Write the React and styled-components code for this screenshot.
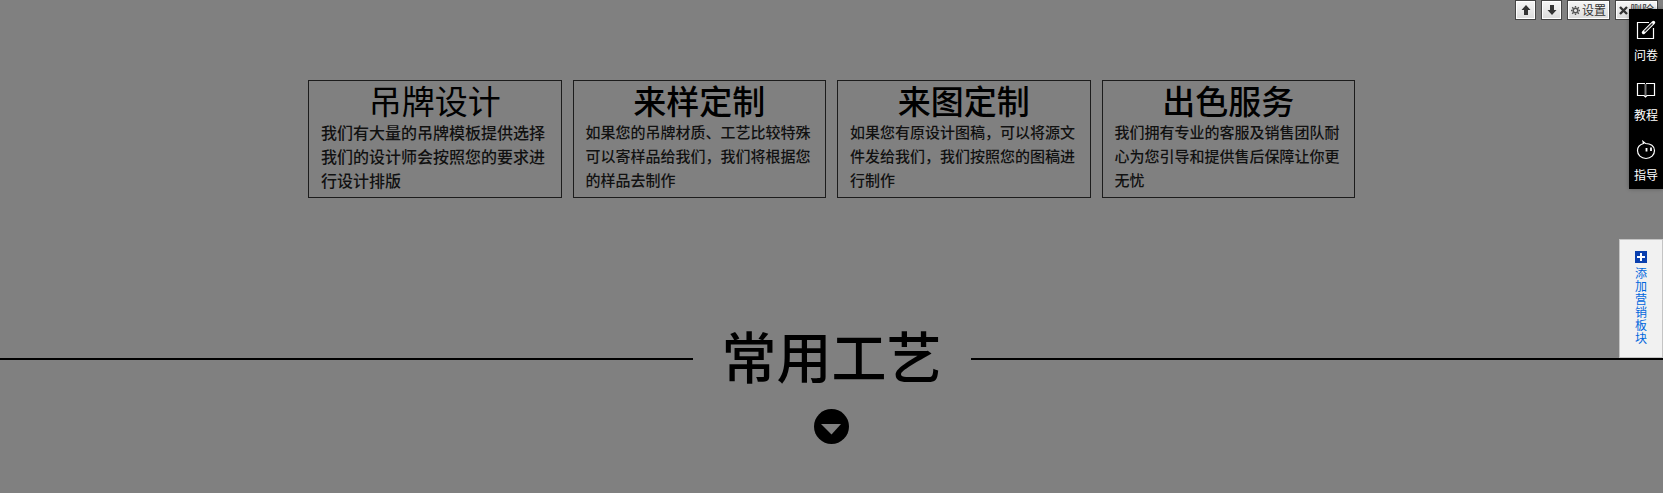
import React from "react";
import styled, { createGlobalStyle } from "styled-components";

const GlobalStyle = createGlobalStyle`
  * {
    box-sizing: border-box;
  }
  body {
    margin: 0;
    background: #808080;
    color: black;
    font-family: "Noto Sans CJK SC", "Noto Sans", sans-serif;
  }
`;

const services = [
  {
    title: "吊牌设计",
    text: "我们有大量的吊牌模板提供选择我们的设计师会按照您的要求进行设计排版",
    light: true,
  },
  {
    title: "来样定制",
    text: "如果您的吊牌材质、工艺比较特殊可以寄样品给我们，我们将根据您的样品去制作",
  },
  {
    title: "来图定制",
    text: "如果您有原设计图稿，可以将源文件发给我们，我们按照您的图稿进行制作",
  },
  {
    title: "出色服务",
    text: "我们拥有专业的客服及销售团队耐心为您引导和提供售后保障让你更无忧",
  },
];

function ArrowIcon({ down }) {
  return (
    <svg width="10" height="10" viewBox="0 0 10 10" fill="#333">
      {down ? (
        <path d="M3 0h4v5h2.5L5 10 .5 5H3z" />
      ) : (
        <path d="M3 10h4V5h2.5L5 0 .5 5H3z" />
      )}
    </svg>
  );
}

function GearIcon() {
  return (
    <svg width="9" height="9" viewBox="0 0 9 9" fill="none" stroke="#555">
      <circle cx="4.5" cy="4.5" r="2.3" strokeWidth="1.5" />
      <path
        d="M4.5 0v1.5M4.5 7.5V9M0 4.5h1.5M7.5 4.5H9M1.2 1.2l1.2 1.2M6.6 6.6l1.2 1.2M7.8 1.2L6.6 2.4M2.4 6.6L1.2 7.8"
        strokeWidth="1.4"
      />
    </svg>
  );
}

function CrossIcon() {
  return (
    <svg width="9" height="9" viewBox="0 0 9 9" stroke="#333" strokeWidth="2.4">
      <path d="M1 1l7 7M8 1L1 8" />
    </svg>
  );
}

function EditIcon() {
  return (
    <svg width="20" height="20" viewBox="0 0 20 20" fill="none" stroke="white">
      <path d="M13 2.5H1.5v16h16V8" strokeWidth="1.2" />
      <path d="M7.5 12.5L17.5 2.5" strokeWidth="3.4" strokeLinecap="round" />
      <path d="M8.5 11.5l8-8" stroke="#222" strokeWidth="1.4" />
    </svg>
  );
}

function BookIcon() {
  return (
    <svg width="20" height="20" viewBox="0 0 20 20" fill="none" stroke="white">
      <path d="M9.5 4v12" stroke="#777" strokeWidth="2" />
      <path d="M9 3.5H1.5v12H8l1.5 1.5 1.5-1.5h7.5v-12H10" strokeWidth="1.2" />
    </svg>
  );
}

function FaceIcon() {
  return (
    <svg width="20" height="20" viewBox="0 0 20 20" fill="none" stroke="white">
      <path
        d="M7 1.5l2.5 2c5 0 9 2.5 9 7s-3.5 8-8.5 8-8.5-3.5-8.5-8c0-3.5 2.5-6 6-7z"
        strokeWidth="1.2"
      />
      <path d="M10.5 8v3.5M15 7.5v3.5" strokeWidth="1.8" />
    </svg>
  );
}

function App() {
  return (
    <Page>
      <GlobalStyle />
      <ServiceList>
        {services.map((service) => (
          <ServiceCard key={service.title}>
            <ServiceTitle $light={service.light}>{service.title}</ServiceTitle>
            <ServiceText $large={service.light}>{service.text}</ServiceText>
          </ServiceCard>
        ))}
      </ServiceList>

      <SectionHeader>
        <h2>常用工艺</h2>
      </SectionHeader>
      <Marker>
        <svg width="35" height="35" viewBox="0 0 35 35">
          <circle cx="17.5" cy="17.5" r="17.5" fill="black" />
          <path d="M7 15h20L17.5 25.5z" fill="#808080" />
        </svg>
      </Marker>

      <Toolbar>
        <ToolButton aria-label="上移">
          <ArrowIcon />
        </ToolButton>
        <ToolButton aria-label="下移">
          <ArrowIcon down />
        </ToolButton>
        <ToolButton $wide>
          <GearIcon />
          设置
        </ToolButton>
        <ToolButton $wide>
          <CrossIcon />
          删除
        </ToolButton>
      </Toolbar>

      <HelpBar>
        <HelpLink href="#survey">
          <EditIcon />
          问卷
        </HelpLink>
        <HelpLink href="#tutorial">
          <BookIcon />
          教程
        </HelpLink>
        <HelpLink href="#guide">
          <FaceIcon />
          指导
        </HelpLink>
      </HelpBar>

      <AddPanel>
        <svg width="12" height="12" viewBox="0 0 12 12">
          <rect width="12" height="12" fill="#0a3fae" />
          <path d="M6 2v8M2 6h8" stroke="white" strokeWidth="2" />
        </svg>
        <span>添加营销板块</span>
      </AddPanel>
    </Page>
  );
}

export default App;

const Page = styled.div`
  position: relative;
  min-height: 100vh;
  padding-top: 80px;
  overflow: hidden;
`;

const ServiceList = styled.div`
  display: flex;
  gap: 11px;
  max-width: 1047px;
  margin: 0 auto;
`;

const ServiceCard = styled.div`
  flex: 1;
  min-height: 118px;
  border: 1px solid #1c1c1c;
`;

const ServiceTitle = styled.h3`
  margin: 0;
  font-size: 33px;
  line-height: 39px;
  font-weight: ${(props) => (props.$light ? 400 : 500)};
  text-align: center;
`;

const ServiceText = styled.p`
  margin: 0;
  padding: 0 12px;
  font-size: ${(props) => (props.$large ? 16 : 15)}px;
  line-height: 24px;
  font-weight: 500;
  color: #111;
`;

const SectionHeader = styled.div`
  display: flex;
  align-items: center;
  margin-top: 116px;
  &::before,
  &::after {
    content: "";
    flex: 1;
    height: 2px;
    background: black;
  }
  > h2 {
    width: 278px;
    margin: 0;
    padding-bottom: 10px;
    font-size: 55px;
    line-height: 80px;
    font-weight: 500;
    text-align: center;
  }
`;

const Marker = styled.div`
  display: flex;
  justify-content: center;
  margin-top: 5px;
`;

const Toolbar = styled.div`
  position: absolute;
  top: 0;
  right: 5px;
  display: flex;
  gap: 5px;
`;

const ToolButton = styled.button`
  display: flex;
  align-items: center;
  justify-content: center;
  gap: 2px;
  width: ${(props) => (props.$wide ? 43 : 21)}px;
  height: 20px;
  padding: 0;
  border: 1px solid #444;
  background: linear-gradient(#f6f6f6, #dcdcdc);
  box-shadow: inset 0 0 0 1px white;
  color: #333;
  font-family: inherit;
  font-size: 12px;
  line-height: 18px;
  white-space: nowrap;
`;

const HelpBar = styled.nav`
  position: absolute;
  top: 9px;
  right: 0;
  width: 34px;
  padding: 11px 0 5px;
  display: flex;
  flex-direction: column;
  gap: 16px;
  background: black;
  box-shadow: 0 0 4px rgba(0, 0, 0, 0.3);
`;

const HelpLink = styled.a`
  display: flex;
  flex-direction: column;
  align-items: center;
  gap: 6px;
  color: white;
  font-size: 12px;
  line-height: 18px;
  text-decoration: none;
`;

const AddPanel = styled.button`
  position: absolute;
  top: 239px;
  right: 0;
  width: 44px;
  height: 119px;
  padding: 0 0 2px;
  display: flex;
  flex-direction: column;
  align-items: center;
  justify-content: center;
  gap: 3px;
  border: 1px solid #c4c4c4;
  background: #f1f1f1;
  color: #0066dd;
  font-family: inherit;
  > span {
    width: 12px;
    font-size: 12px;
    line-height: 13px;
  }
`;
